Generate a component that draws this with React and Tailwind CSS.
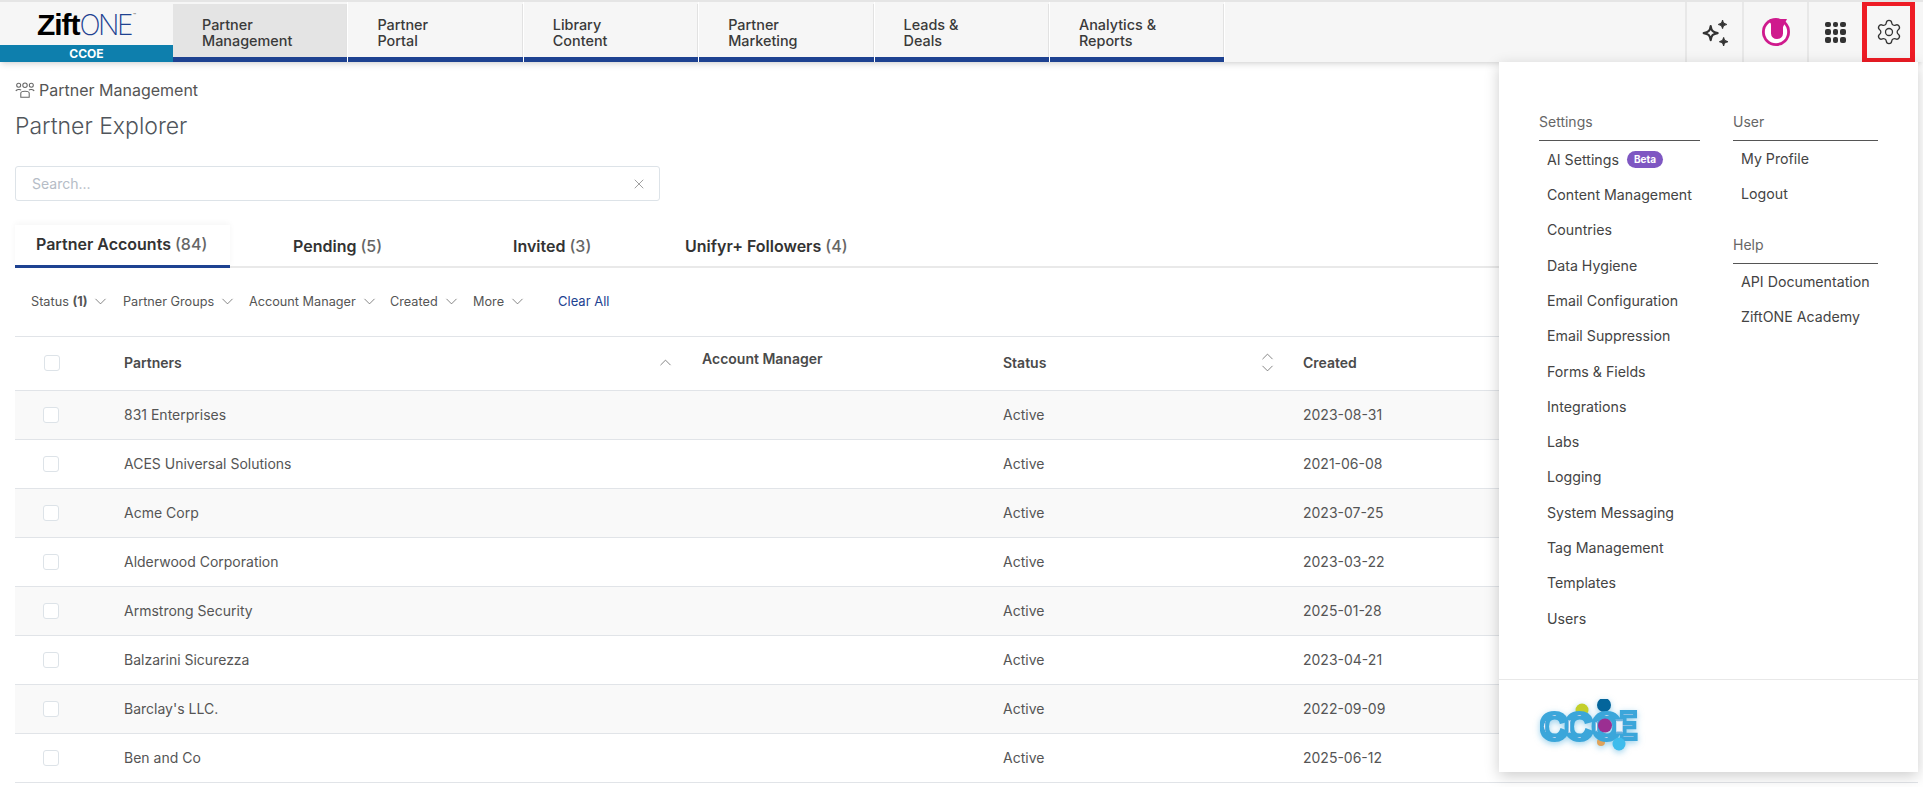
import { ChevronDown, ChevronUp, Settings, X } from "lucide-react";

const navItems = [
  ["Partner", "Management"],
  ["Partner", "Portal"],
  ["Library", "Content"],
  ["Partner", "Marketing"],
  ["Leads &", "Deals"],
  ["Analytics &", "Reports"],
];

const tabs = [
  ["Partner Accounts", "(84)", "w-[215px] pl-[21px]"],
  ["Pending", "(5)", "w-[220px] pl-[63px]"],
  ["Invited", "(3)", "w-[235px] pl-[63px]"],
  ["Unifyr+ Followers", "(4)", "pl-0"],
];

const rows = [
  ["831 Enterprises", "2023-08-31"],
  ["ACES Universal Solutions", "2021-06-08"],
  ["Acme Corp", "2023-07-25"],
  ["Alderwood Corporation", "2023-03-22"],
  ["Armstrong Security", "2025-01-28"],
  ["Balzarini Sicurezza", "2023-04-21"],
  ["Barclay's LLC.", "2022-09-09"],
  ["Ben and Co", "2025-06-12"],
];

const settingsLinks = [
  "Content Management",
  "Countries",
  "Data Hygiene",
  "Email Configuration",
  "Email Suppression",
  "Forms & Fields",
  "Integrations",
  "Labs",
  "Logging",
  "System Messaging",
  "Tag Management",
  "Templates",
  "Users",
];

const Sparkles = () => (
  <svg width="28" height="28" viewBox="0 0 26 26" fill="none">
    <path d="M9 7.5 C9.7 12 11 13.3 15.5 14 C11 14.7 9.7 16 9 20.5 C8.3 16 7 14.7 2.5 14 C7 13.3 8.3 12 9 7.5 Z" stroke="#333" strokeWidth="2" strokeLinejoin="round" />
    <path d="M20 2 C20.5 4.8 21.2 5.5 24 6 C21.2 6.5 20.5 7.2 20 10 C19.5 7.2 18.8 6.5 16 6 C18.8 5.5 19.5 4.8 20 2 Z" fill="#333" stroke="#333" />
    <path d="M21 18 C21.5 20.8 22.2 21.5 25 22 C22.2 22.5 21.5 23.2 21 26 C20.5 23.2 19.8 22.5 17 22 C19.8 21.5 20.5 20.8 21 18 Z" fill="#333" stroke="#333" />
  </svg>
);

const UnifyrMark = () => (
  <svg width="28" height="28" viewBox="0 0 28 28">
    <circle cx="14" cy="14" r="14" fill="#cf1a8d" />
    <circle cx="14" cy="14" r="11.2" fill="#fff" />
    <path d="M8 1 H21 V15.5 A6 5.5 0 0 1 9 15.5 V7 C9 5 8 4 6 4.5 Z" fill="#cf1a8d" />
    <path d="M20 1 H25 L21 9 H20 Z" fill="#cf1a8d" />
  </svg>
);

const AppsGrid = () => (
  <div className="grid grid-cols-3 gap-[2px] w-[21px] h-[21px]">
    {Array.from({ length: 9 }).map((_, i) => (
      <span key={i} className="bg-[#333] rounded-[2px]" />
    ))}
  </div>
);

const UsersIcon = () => (
  <svg width="20" height="17" viewBox="0 0 19 16" fill="none" stroke="#666" strokeWidth="1">
    <circle cx="3.5" cy="3" r="1.9" />
    <circle cx="9.5" cy="3" r="2.1" />
    <circle cx="15.5" cy="3" r="1.9" />
    <path d="M.8 8.5 C1.5 6.8 5 6.8 5.8 7.6" />
    <path d="M18.2 8.5 C17.5 6.8 14 6.8 13.2 7.6" />
    <path d="M5.5 14.5 V10.5 C5.5 8 13.5 8 13.5 10.5 V14.5 Z" />
  </svg>
);

const CcoeLogo = () => (
  <svg width="104" height="56" viewBox="0 0 104 56" className="drop-shadow-[0_2px_3px_rgba(59,166,218,0.5)]">
    <defs>
      <filter id="inline" x="-10%" y="-10%" width="120%" height="120%">
        <feMorphology in="SourceAlpha" operator="erode" radius="4" result="core" />
        <feFlood floodColor="#fff" floodOpacity="0.85" />
        <feComposite in2="core" operator="in" result="line" />
        <feMerge>
          <feMergeNode in="SourceGraphic" />
          <feMergeNode in="line" />
        </feMerge>
      </filter>
    </defs>
    <circle cx="42" cy="11" r="6.5" fill="#c3cf2b" />
    <circle cx="64" cy="6" r="7" fill="#04659b" />
    <circle cx="61" cy="43" r="4" fill="#e0a35a" />
    <g filter="url(#inline)" fontFamily="'Liberation Sans', sans-serif" fontWeight="700" fontSize="38" fill="#3ba6da" stroke="#3ba6da" strokeWidth="4">
      <text x="0 25 52" y="40.5">CCO</text>
      <text x="0" y="40.5" transform="translate(79.5 0) scale(0.7 1)">E</text>
    </g>
    <circle cx="79" cy="45" r="6.5" fill="#3dbcec" />
    <circle cx="65" cy="26.5" r="7" fill="#9b2f92" />
  </svg>
);

const Filter = ({ children, className = "" }) => (
  <button className={`flex items-center gap-1 text-[12.7px] text-[#555] ${className}`}>
    <span>{children}</span>
    <ChevronDown size={19} strokeWidth={1} className="text-[#666]" />
  </button>
);

const Checkbox = ({ className = "" }) => (
  <span className={`block w-4 h-4 bg-white border border-[#dde3e8] rounded-[3px] ${className}`} />
);

const MenuLink = ({ children }) => (
  <a className="flex items-center h-[35.3px] text-[14.2px] text-[#444]">{children}</a>
);

const MenuHeading = ({ children }) => (
  <div className="h-[31px] border-b border-[#555] text-sm leading-6 text-[#666]">{children}</div>
);

export default function App() {
  return (
    <div className="relative w-[1923px] h-[787px] overflow-hidden bg-white font-['Inter',sans-serif]">
      <header className="relative z-10 flex h-[62px] bg-[#f6f6f6] border-t-2 border-[#e5e5e5] shadow-md">
        <div className="flex flex-col w-[173px] shrink-0">
          <div className="flex-1 flex items-start justify-center pt-[11px]">
            <span className="font-['Liberation_Sans',sans-serif] font-bold text-[30px] leading-6 tracking-[-1px] text-black">Zift</span>
            <span className="font-extralight text-[28px] leading-6 tracking-[-2.5px] text-[#1e4291]">ONE</span>
            <span className="ml-[2px] text-[5px] leading-none text-[#555]">™</span>
          </div>
          <div className="h-[17px] bg-[#0e7fad] text-white text-xs font-bold leading-[17px] text-center">CCOE</div>
        </div>

        <nav className="flex">
          {navItems.map(([a, b], i) => (
            <a key={b} className="w-[175.4px] h-[60px] flex flex-col border-r border-white">
              <span className={`flex-1 mt-[2px] pl-[29px] pt-[13px] border-r border-[#e2e2e2] text-[14.4px] font-medium leading-4 text-[#3a3a3a] ${i === 0 ? "bg-[#e4e4e4]" : ""}`}>
                {a}
                <br />
                {b}
              </span>
              <span className="h-[5px] bg-[#1e4291]" />
            </a>
          ))}
        </nav>

        <div className="ml-auto flex h-full">
          <div className="w-[57px] flex items-center justify-center border-l-2 border-[#e8e8e8]">
            <Sparkles />
          </div>
          <div className="w-[65px] flex items-center justify-center border-l-2 border-[#e8e8e8]">
            <UnifyrMark />
          </div>
          <div className="w-[55px] flex items-center justify-center border-l-2 border-[#e8e8e8]">
            <AppsGrid />
          </div>
          <div className="w-[53px] h-[61px] flex items-center justify-center border-[5px] border-t-[4px] border-[#ee1c25]">
            <Settings size={28} strokeWidth={1.1} className="text-[#333]" />
          </div>
          <div className="w-[8px]" />
        </div>
      </header>

      <main className="pl-[15px] pr-[5px]">
        <div className="flex items-center gap-[4px] pt-[16px] h-[40px] text-base text-[#555]">
          <UsersIcon />
          <span>Partner Management</span>
        </div>
        <h1 className="mt-2 h-8 text-[23px] leading-8 font-light text-[#50555b]">Partner Explorer</h1>

        <div className="mt-6 flex items-center w-[645px] h-[35px] pl-4 pr-3 border border-[#dde3e8] rounded-[3px]">
          <input
            placeholder="Search..."
            className="flex-1 outline-none text-sm text-[#555] placeholder:text-[#b5bcc6]"
          />
          <X size={16} strokeWidth={1.2} className="text-[#888]" />
        </div>

        <div className="mt-6 flex h-[43px] border-b-2 border-[#e9e9e9]">
          {tabs.map(([label, count, cls], i) => (
            <div
              key={label}
              className={`h-[43px] flex items-center pb-[2px] text-base font-semibold text-[#333] ${cls} ${i === 0 ? "border-b-[3px] border-[#1e4291] shadow-[0_-2px_6px_rgba(0,0,0,0.04)]" : ""}`}
            >
              {label}
              <span className="ml-1 font-medium text-[#666]">{count}</span>
            </div>
          ))}
        </div>

        <div className="flex items-center h-[68px] pl-4">
          <Filter className="w-[92px]">
            Status <b className="font-bold">(1)</b>
          </Filter>
          <Filter className="w-[126px]">Partner Groups</Filter>
          <Filter className="w-[141px]">Account Manager</Filter>
          <Filter className="w-[83px]">Created</Filter>
          <Filter className="w-[85px]">More</Filter>
          <a className="text-[13px] text-[#1e4291]">Clear All</a>
        </div>

        <div className="grid grid-cols-[109px_578px_301px_300px_1fr] h-[55px] pb-[2px] border-t border-b border-[#e1e4e8] text-sm font-semibold text-[#4a4a4a]">
          <div className="flex items-center pl-[29px]">
            <Checkbox />
          </div>
          <div className="flex items-center justify-between pr-[27px]">
            <span>Partners</span>
            <ChevronUp size={19} strokeWidth={1} className="text-[#666]" />
          </div>
          <div className="pt-[12px]">Account Manager</div>
          <div className="flex items-center justify-between pr-[26px]">
            <span>Status</span>
            <span className="flex flex-col">
              <ChevronUp size={19} strokeWidth={1} className="text-[#666]" />
              <ChevronDown size={19} strokeWidth={1} className="-mt-[7px] text-[#666]" />
            </span>
          </div>
          <div className="flex items-center">Created</div>
        </div>

        {rows.map(([name, created], i) => (
          <div
            key={name}
            className={`grid grid-cols-[109px_578px_301px_300px_1fr] h-[49px] pb-px items-center border-b border-[#e1e4e8] text-sm text-[#555] ${i % 2 === 0 ? "bg-[#f9f9f9]" : "bg-white"}`}
          >
            <div className="pl-[28px]">
              <Checkbox />
            </div>
            <div>{name}</div>
            <div />
            <div>Active</div>
            <div>{created}</div>
          </div>
        ))}
      </main>

      {/* Settings dropdown */}
      <aside className="absolute z-20 left-[1499px] top-[62px] w-[419px] h-[710px] bg-white shadow-[0_4px_14px_rgba(0,0,0,0.2)] flex flex-col">
        <div className="flex-1 flex pl-10 pt-[48px]">
          <div className="w-[161px]">
            <MenuHeading>Settings</MenuHeading>
            <div className="pl-2 pt-[0.8px]">
              <MenuLink>
                AI Settings
                <span className="ml-2 w-9 h-[17px] rounded-full bg-[#7e57c2] text-white text-[10px] font-bold leading-[17px] text-center">Beta</span>
              </MenuLink>
              {settingsLinks.map((l) => (
                <MenuLink key={l}>{l}</MenuLink>
              ))}
            </div>
          </div>
          <div className="w-[145px] ml-[33px]">
            <MenuHeading>User</MenuHeading>
            <div className="pl-2">
              <MenuLink>My Profile</MenuLink>
              <MenuLink>Logout</MenuLink>
            </div>
            <div className="mt-[21px]">
              <MenuHeading>Help</MenuHeading>
            </div>
            <div className="pl-2 pt-[0.5px]">
              <MenuLink>API Documentation</MenuLink>
              <MenuLink>ZiftONE Academy</MenuLink>
            </div>
          </div>
        </div>
        <div className="h-[93px] border-t border-[#e8e8e8] pl-[41px] pt-[19px]">
          <CcoeLogo />
        </div>
      </aside>
    </div>
  );
}
